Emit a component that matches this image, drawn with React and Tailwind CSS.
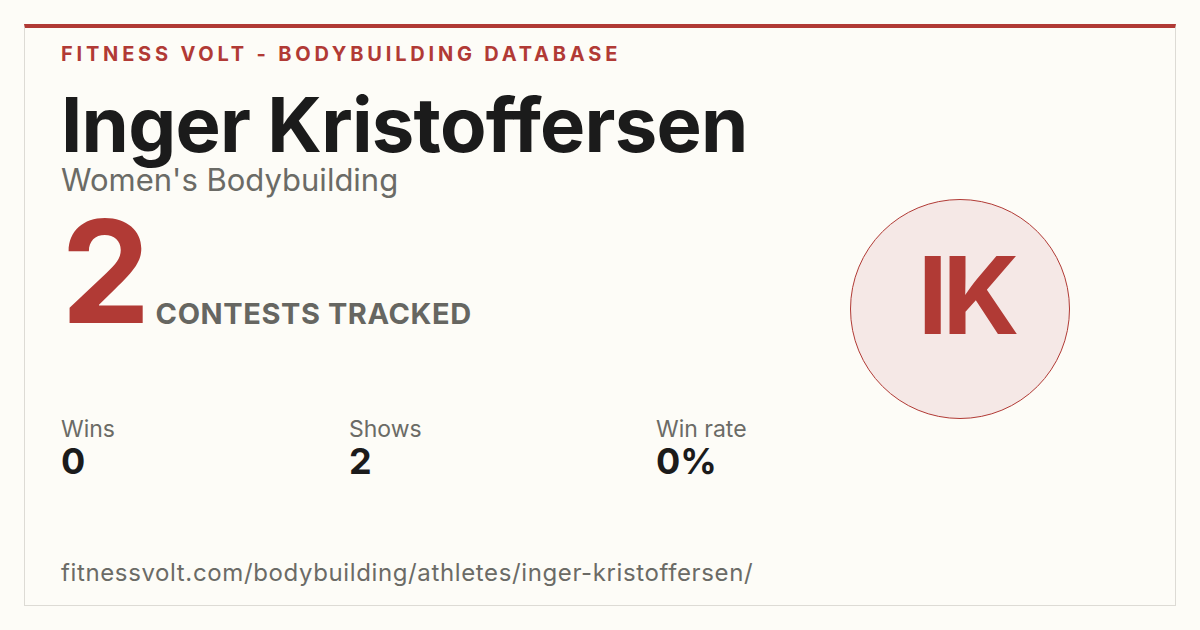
import React from "react";

const stats = [
  { label: "Wins", value: "0", width: "w-[288px]" },
  { label: "Shows", value: "2", width: "w-[307px]" },
  { label: "Win rate", value: "0%", width: "w-auto" },
];

export default function App() {
  return (
    <div className="w-[1200px] h-[630px] bg-[#fdfcf7] p-6 font-['Inter',sans-serif]">
      <div className="h-full flex border border-[#dddbd5] border-t-4 border-t-[#b13a35] bg-[#fdfcf7]">
        {/* left column */}
        <div className="flex-1 min-w-0 flex flex-col pl-9 pt-[12px]">
          <div className="text-[20px] font-bold tracking-[0.19em] text-[#b13a35] leading-[28px] whitespace-nowrap">
            FITNESS VOLT - BODYBUILDING DATABASE
          </div>
          <h1 className="mt-[16px] text-[76px] font-bold tracking-[-0.01em] text-[#1b1b1b] leading-[80px] whitespace-nowrap">
            Inger Kristoffersen
          </h1>
          <div className="text-[31px] text-[#6b6b66] leading-[32px]">Women's Bodybuilding</div>
          <div className="flex items-end mt-[15px]">
            <span className="text-[142px] font-bold text-[#b13a35] leading-[120px] tracking-[-0.02em]">2</span>
            <span className="ml-2 mb-[2px] text-[29px] font-bold tracking-[0.02em] text-[#666661] leading-[30px]">
              CONTESTS TRACKED
            </span>
          </div>
          <div className="flex mt-[85px]">
            {stats.map((s) => (
              <div key={s.label} className={`${s.width} shrink-0`}>
                <div className="text-[23px] text-[#6b6b66] leading-[26px]">{s.label}</div>
                <div className="text-[36px] font-bold text-[#1b1b1b] leading-[38px]">{s.value}</div>
              </div>
            ))}
          </div>
          <div className="mt-auto mb-[18px] text-[24px] tracking-[0.026em] text-[#6b6b66] leading-[28px] whitespace-nowrap">
            fitnessvolt.com/bodybuilding/athletes/inger-kristoffersen/
          </div>
        </div>
        {/* avatar */}
        <div className="w-[430px] shrink-0 flex items-center justify-center pb-[16px]">
          <div className="w-[220px] h-[220px] rounded-full border-[1.5px] border-[#b13a35] bg-[#f5e8e6] flex items-center justify-center">
            <span className="mb-[26px] ml-[12px] text-[107px] font-bold text-[#b13a35] leading-none tracking-[-0.05em]">IK</span>
          </div>
        </div>
      </div>
    </div>
  );
}
